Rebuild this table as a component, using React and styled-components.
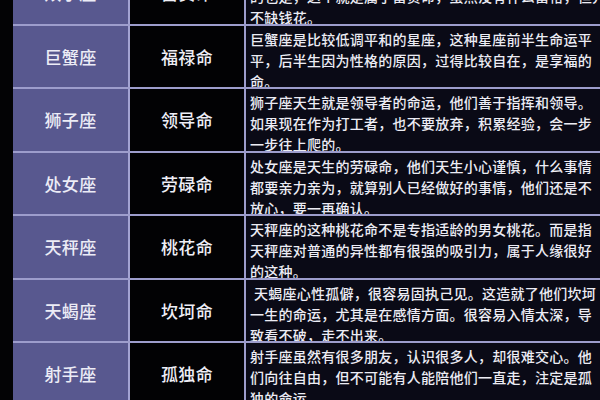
import React from "react";
import styled, { createGlobalStyle } from "styled-components";

const rows = [
    {
        sign: "双子座",
        fate: "富贵命",
        lines: [
            "双子座头脑灵活，善于交际，人缘也好，赚钱的机会多",
            "的也是，这个就是属于富贵命，虽然没有什么富裕，但并",
            "不缺钱花。",
        ],
    },
    {
        sign: "巨蟹座",
        fate: "福禄命",
        lines: [
            "巨蟹座是比较低调平和的星座，这种星座前半生命运平",
            "平，后半生因为性格的原因，过得比较自在，是享福的",
            "命。",
        ],
    },
    {
        sign: "狮子座",
        fate: "领导命",
        lines: [
            "狮子座天生就是领导者的命运，他们善于指挥和领导。",
            "如果现在作为打工者，也不要放弃，积累经验，会一步",
            "一步往上爬的。",
        ],
    },
    {
        sign: "处女座",
        fate: "劳碌命",
        lines: [
            "处女座是天生的劳碌命，他们天生小心谨慎，什么事情",
            "都要亲力亲为，就算别人已经做好的事情，他们还是不",
            "放心，要一再确认。",
        ],
    },
    {
        sign: "天秤座",
        fate: "桃花命",
        lines: [
            "天秤座的这种桃花命不是专指适龄的男女桃花。而是指",
            "天秤座对普通的异性都有很强的吸引力，属于人缘很好",
            "的这种。",
        ],
    },
    {
        sign: "天蝎座",
        fate: "坎坷命",
        indent: true,
        lines: [
            "天蝎座心性孤僻，很容易固执己见。这造就了他们坎坷",
            "一生的命运，尤其是在感情方面。很容易入情太深，导",
            "致看不破，走不出来。",
        ],
    },
    {
        sign: "射手座",
        fate: "孤独命",
        lines: [
            "射手座虽然有很多朋友，认识很多人，却很难交心。他",
            "们向往自由，但不可能有人能陪他们一直走，注定是孤",
            "独的命运。",
        ],
    },
];

const App = () => {
    return (
        <>
            <GlobalStyle />
            <Page>
                <Table>
                    {rows.map((row) => (
                        <Row key={row.sign}>
                            <SignCell>{row.sign}</SignCell>
                            <FateCell>{row.fate}</FateCell>
                            <TextCell>
                                {row.lines.map((line, i) => (
                                    <Line key={i} $indent={row.indent && i === 0}>
                                        {line}
                                    </Line>
                                ))}
                            </TextCell>
                        </Row>
                    ))}
                </Table>
            </Page>
        </>
    );
};

export default App;

const GlobalStyle = createGlobalStyle`
    html, body {
        margin: 0;
        padding: 0;
        background: #030305;
        overflow: hidden;
    }
    body {
        font-family: "Noto Sans CJK SC", "Noto Sans", sans-serif;
    }
`;

const Page = styled.div`
    width: 600px;
    height: 400px;
    overflow: hidden;
    background: #030305;
    padding-left: 13px;
    box-sizing: border-box;
`;

const Table = styled.div`
    display: flex;
    flex-direction: column;
    margin-top: -38px;
`;

const Row = styled.div`
    display: grid;
    grid-template-columns: 117px 116px 1fr;
    height: 63.5px;
    box-sizing: border-box;
    border-bottom: 2px solid #9d9dcc;
`;

const SignCell = styled.div`
    display: flex;
    align-items: center;
    justify-content: center;
    background: #58588f;
    color: #ececf6;
    font-size: 17px;
    font-weight: 500;
    letter-spacing: 0.3px;
    border-right: 2px solid #a3a3d2;
`;

const FateCell = styled.div`
    display: flex;
    align-items: center;
    justify-content: center;
    background: #020204;
    color: #eeeef6;
    font-size: 17px;
    font-weight: 500;
    letter-spacing: 0.3px;
    border-right: 2px solid #9d9dcc;
`;

const TextCell = styled.div`
    background: #0a0a16;
    color: #ececf4;
    font-size: 14px;
    font-weight: 500;
    letter-spacing: 0.25px;
    line-height: 21px;
    padding: 3px 0 0 4px;
    overflow: hidden;
`;

const Line = styled.div`
    white-space: nowrap;
    padding-left: ${(p) => (p.$indent ? "4px" : "0")};
`;
